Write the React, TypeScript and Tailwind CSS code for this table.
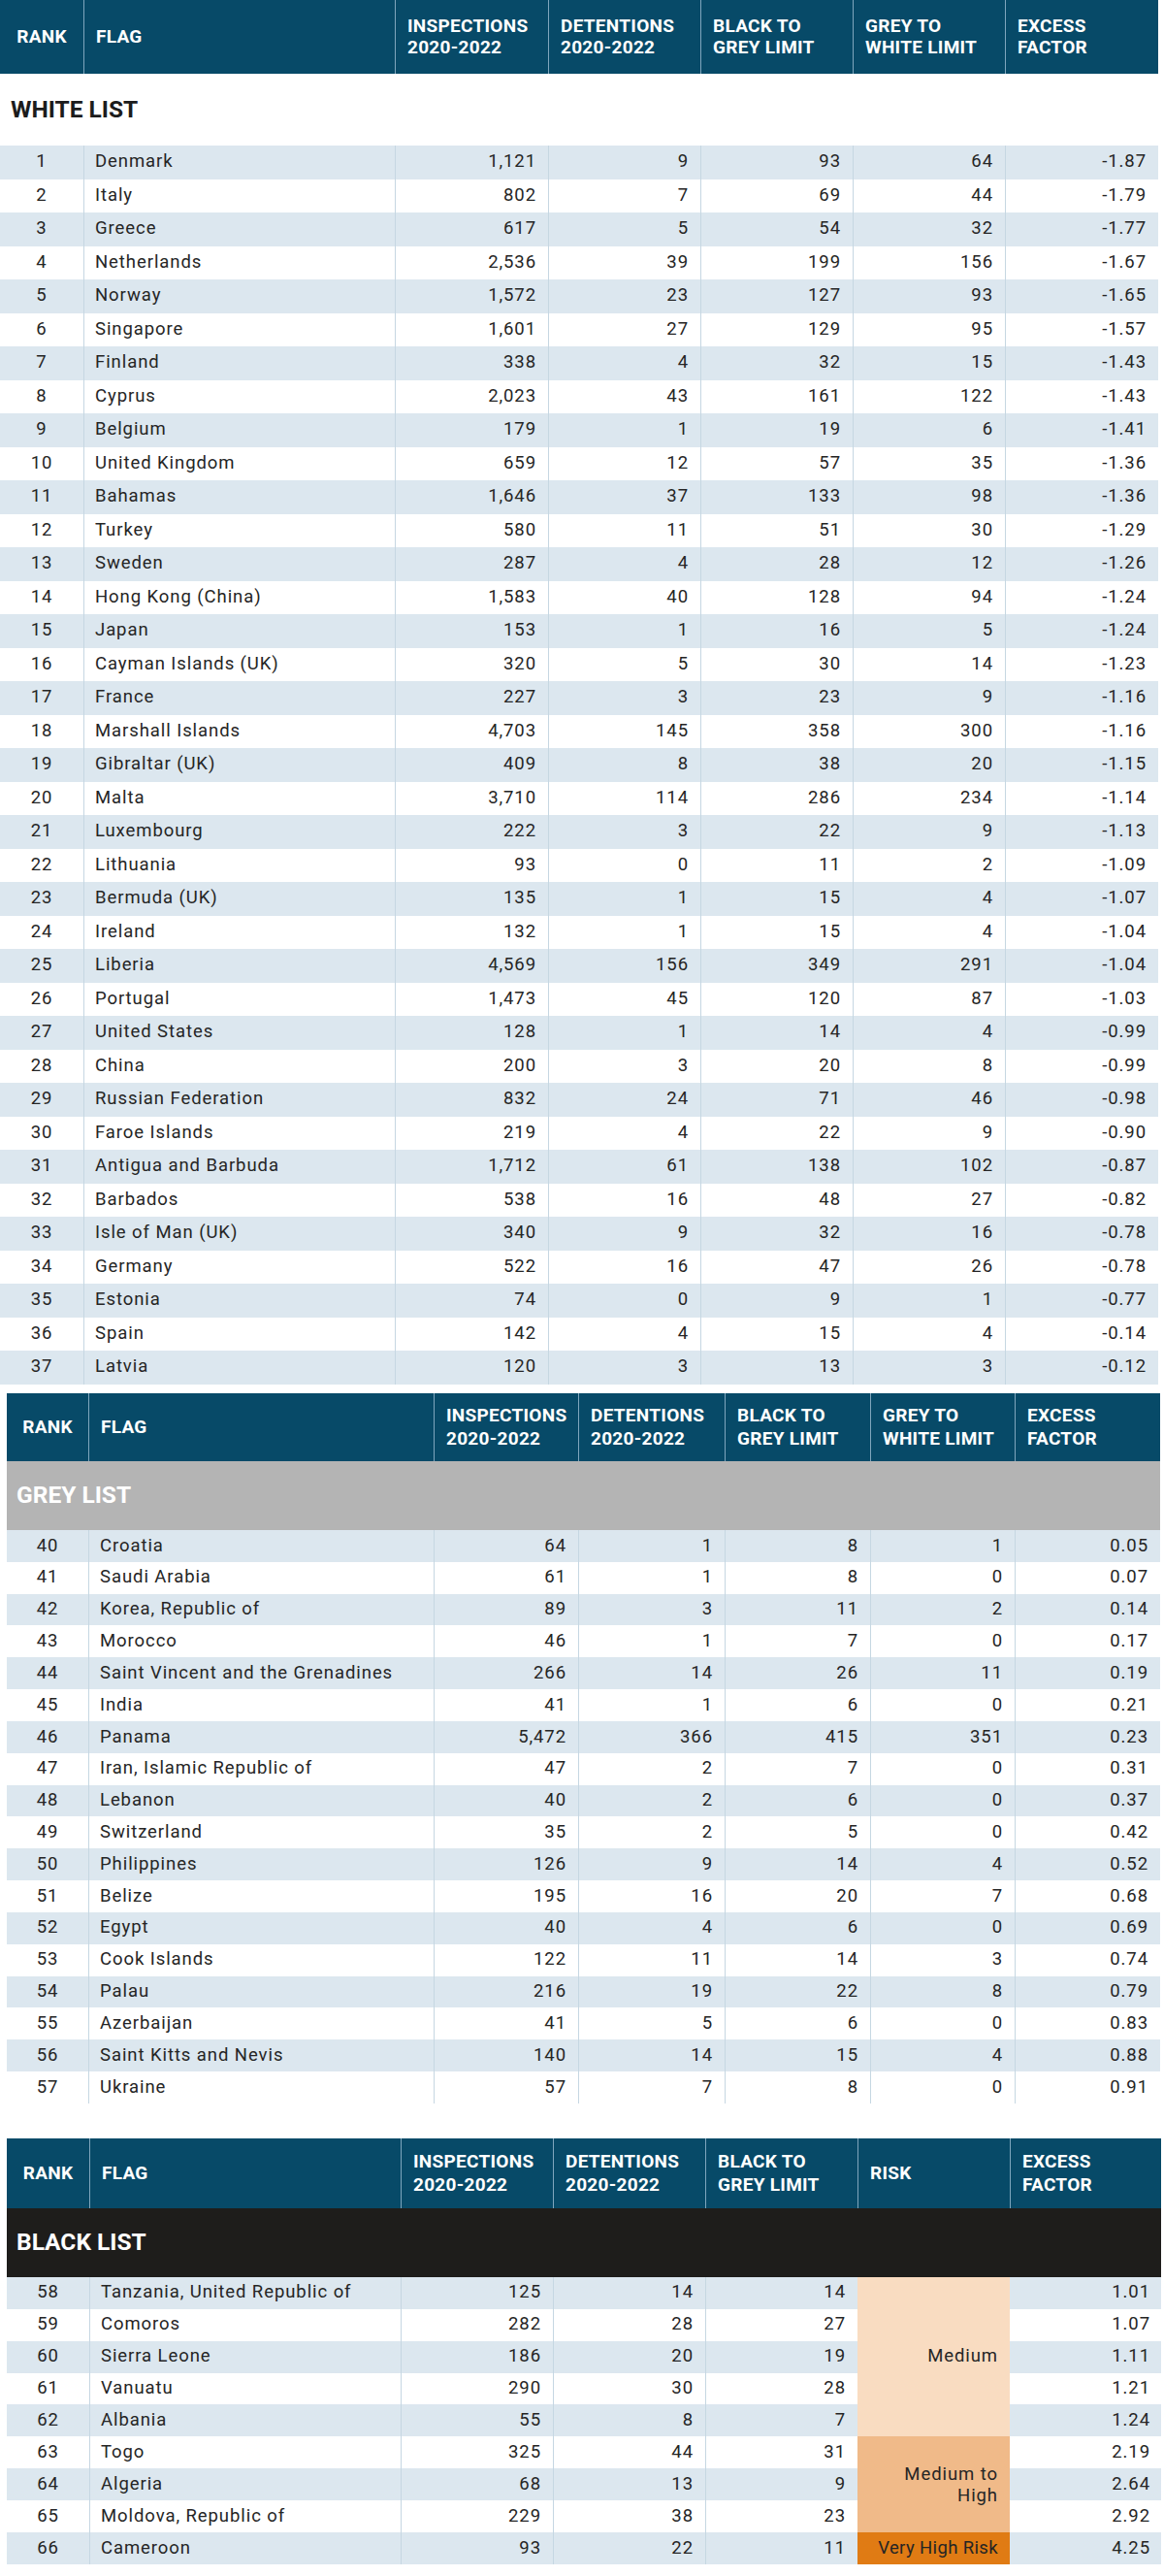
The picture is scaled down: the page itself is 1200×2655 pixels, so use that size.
import React from "react";

type Row = [string, string, string, string, string, string, string];

const white: Row[] = [
  ["1", "Denmark", "1,121", "9", "93", "64", "-1.87"],
  ["2", "Italy", "802", "7", "69", "44", "-1.79"],
  ["3", "Greece", "617", "5", "54", "32", "-1.77"],
  ["4", "Netherlands", "2,536", "39", "199", "156", "-1.67"],
  ["5", "Norway", "1,572", "23", "127", "93", "-1.65"],
  ["6", "Singapore", "1,601", "27", "129", "95", "-1.57"],
  ["7", "Finland", "338", "4", "32", "15", "-1.43"],
  ["8", "Cyprus", "2,023", "43", "161", "122", "-1.43"],
  ["9", "Belgium", "179", "1", "19", "6", "-1.41"],
  ["10", "United Kingdom", "659", "12", "57", "35", "-1.36"],
  ["11", "Bahamas", "1,646", "37", "133", "98", "-1.36"],
  ["12", "Turkey", "580", "11", "51", "30", "-1.29"],
  ["13", "Sweden", "287", "4", "28", "12", "-1.26"],
  ["14", "Hong Kong (China)", "1,583", "40", "128", "94", "-1.24"],
  ["15", "Japan", "153", "1", "16", "5", "-1.24"],
  ["16", "Cayman Islands (UK)", "320", "5", "30", "14", "-1.23"],
  ["17", "France", "227", "3", "23", "9", "-1.16"],
  ["18", "Marshall Islands", "4,703", "145", "358", "300", "-1.16"],
  ["19", "Gibraltar (UK)", "409", "8", "38", "20", "-1.15"],
  ["20", "Malta", "3,710", "114", "286", "234", "-1.14"],
  ["21", "Luxembourg", "222", "3", "22", "9", "-1.13"],
  ["22", "Lithuania", "93", "0", "11", "2", "-1.09"],
  ["23", "Bermuda (UK)", "135", "1", "15", "4", "-1.07"],
  ["24", "Ireland", "132", "1", "15", "4", "-1.04"],
  ["25", "Liberia", "4,569", "156", "349", "291", "-1.04"],
  ["26", "Portugal", "1,473", "45", "120", "87", "-1.03"],
  ["27", "United States", "128", "1", "14", "4", "-0.99"],
  ["28", "China", "200", "3", "20", "8", "-0.99"],
  ["29", "Russian Federation", "832", "24", "71", "46", "-0.98"],
  ["30", "Faroe Islands", "219", "4", "22", "9", "-0.90"],
  ["31", "Antigua and Barbuda", "1,712", "61", "138", "102", "-0.87"],
  ["32", "Barbados", "538", "16", "48", "27", "-0.82"],
  ["33", "Isle of Man (UK)", "340", "9", "32", "16", "-0.78"],
  ["34", "Germany", "522", "16", "47", "26", "-0.78"],
  ["35", "Estonia", "74", "0", "9", "1", "-0.77"],
  ["36", "Spain", "142", "4", "15", "4", "-0.14"],
  ["37", "Latvia", "120", "3", "13", "3", "-0.12"],
];

const grey: Row[] = [
  ["40", "Croatia", "64", "1", "8", "1", "0.05"],
  ["41", "Saudi Arabia", "61", "1", "8", "0", "0.07"],
  ["42", "Korea, Republic of", "89", "3", "11", "2", "0.14"],
  ["43", "Morocco", "46", "1", "7", "0", "0.17"],
  ["44", "Saint Vincent and the Grenadines", "266", "14", "26", "11", "0.19"],
  ["45", "India", "41", "1", "6", "0", "0.21"],
  ["46", "Panama", "5,472", "366", "415", "351", "0.23"],
  ["47", "Iran, Islamic Republic of", "47", "2", "7", "0", "0.31"],
  ["48", "Lebanon", "40", "2", "6", "0", "0.37"],
  ["49", "Switzerland", "35", "2", "5", "0", "0.42"],
  ["50", "Philippines", "126", "9", "14", "4", "0.52"],
  ["51", "Belize", "195", "16", "20", "7", "0.68"],
  ["52", "Egypt", "40", "4", "6", "0", "0.69"],
  ["53", "Cook Islands", "122", "11", "14", "3", "0.74"],
  ["54", "Palau", "216", "19", "22", "8", "0.79"],
  ["55", "Azerbaijan", "41", "5", "6", "0", "0.83"],
  ["56", "Saint Kitts and Nevis", "140", "14", "15", "4", "0.88"],
  ["57", "Ukraine", "57", "7", "8", "0", "0.91"],
];

const black: [string, string, string, string, string, string][] = [
  ["58", "Tanzania, United Republic of", "125", "14", "14", "1.01"],
  ["59", "Comoros", "282", "28", "27", "1.07"],
  ["60", "Sierra Leone", "186", "20", "19", "1.11"],
  ["61", "Vanuatu", "290", "30", "28", "1.21"],
  ["62", "Albania", "55", "8", "7", "1.24"],
  ["63", "Togo", "325", "44", "31", "2.19"],
  ["64", "Algeria", "68", "13", "9", "2.64"],
  ["65", "Moldova, Republic of", "229", "38", "23", "2.92"],
  ["66", "Cameroon", "93", "22", "11", "4.25"],
];

const HSEP = "border-l border-[#7fa6bd]";
const BSEP = "border-l border-[#c6d7e2]";

function HeadCell({ children, first, lh }: { children: React.ReactNode; first?: boolean; lh: string }) {
  return (
    <div
      className={
        "flex items-center text-white font-bold text-[19px] tracking-[0.015em] " +
        lh +
        " " +
        (first ? "justify-center" : HSEP + " pl-[12px]")
      }
    >
      <div>{children}</div>
    </div>
  );
}

function WhiteHeader() {
  return (
    <div className="grid grid-cols-[86px_321px_158px_157px_157px_157px_158px] h-[76px] bg-[#074a68]">
      <HeadCell first lh="leading-[22px]">RANK</HeadCell>
      <HeadCell lh="leading-[22px]">FLAG</HeadCell>
      <HeadCell lh="leading-[22px]">INSPECTIONS<br />2020-2022</HeadCell>
      <HeadCell lh="leading-[22px]">DETENTIONS<br />2020-2022</HeadCell>
      <HeadCell lh="leading-[22px]">BLACK TO<br />GREY LIMIT</HeadCell>
      <HeadCell lh="leading-[22px]">GREY TO<br />WHITE LIMIT</HeadCell>
      <HeadCell lh="leading-[22px]">EXCESS<br />FACTOR</HeadCell>
    </div>
  );
}

function GreyHeader() {
  return (
    <div className="grid grid-cols-[84px_356px_149px_151px_150px_149px_150px] h-[70px] bg-[#074a68]">
      <HeadCell first lh="leading-[24px]">RANK</HeadCell>
      <HeadCell lh="leading-[24px]">FLAG</HeadCell>
      <HeadCell lh="leading-[24px]">INSPECTIONS<br />2020-2022</HeadCell>
      <HeadCell lh="leading-[24px]">DETENTIONS<br />2020-2022</HeadCell>
      <HeadCell lh="leading-[24px]">BLACK TO<br />GREY LIMIT</HeadCell>
      <HeadCell lh="leading-[24px]">GREY TO<br />WHITE LIMIT</HeadCell>
      <HeadCell lh="leading-[24px]">EXCESS<br />FACTOR</HeadCell>
    </div>
  );
}

function BlackHeader() {
  return (
    <div className="grid grid-cols-[85px_321px_157px_157px_157px_157px_156px] h-[72px] bg-[#074a68]">
      <HeadCell first lh="leading-[24px]">RANK</HeadCell>
      <HeadCell lh="leading-[24px]">FLAG</HeadCell>
      <HeadCell lh="leading-[24px]">INSPECTIONS<br />2020-2022</HeadCell>
      <HeadCell lh="leading-[24px]">DETENTIONS<br />2020-2022</HeadCell>
      <HeadCell lh="leading-[24px]">BLACK TO<br />GREY LIMIT</HeadCell>
      <HeadCell lh="leading-[24px]">RISK</HeadCell>
      <HeadCell lh="leading-[24px]">EXCESS<br />FACTOR</HeadCell>
    </div>
  );
}

function BodyRow({ r, i, cols, h }: { r: string[]; i: number; cols: string; h: string }) {
  const bg = i % 2 === 0 ? "bg-[#dce7ef]" : "bg-white";
  return (
    <div className={"grid " + cols + " " + h + " " + bg}>
      {r.map((c, j) => (
        <div
          key={j}
          className={
            "flex items-center " +
            (j === 0 ? "justify-center" : j === 1 ? BSEP + " pl-[11px]" : BSEP + " justify-end pr-[12px]")
          }
        >
          {c}
        </div>
      ))}
    </div>
  );
}

export default function App() {
  return (
    <div className="w-[1200px] h-[2655px] bg-white text-[#252525] font-['Roboto',sans-serif] text-[18.5px] tracking-[0.05em]">
      {/* WHITE LIST */}
      <div className="w-[1194px]">
        <WhiteHeader />
        <div className="h-[74px] flex items-center pl-[11px] text-[24.5px] font-bold text-[#1c1c1c] tracking-normal">
          WHITE LIST
        </div>
        {white.map((r, i) => (
          <BodyRow key={i} r={r} i={i} cols="grid-cols-[86px_321px_158px_157px_157px_157px_158px]" h="h-[34.5px]" />
        ))}
      </div>

      {/* GREY LIST */}
      <div className="ml-[7px] mt-[9.5px] w-[1189px]">
        <GreyHeader />
        <div className="h-[71px] flex items-center pl-[10px] text-[24.5px] font-bold text-white bg-[#b4b4b4] tracking-normal">
          GREY LIST
        </div>
        {grey.map((r, i) => (
          <BodyRow key={i} r={r} i={i} cols="grid-cols-[84px_356px_149px_151px_150px_149px_150px]" h="h-[32.83px]" />
        ))}
      </div>

      {/* BLACK LIST */}
      <div className="ml-[7px] mt-[36px] w-[1190px]">
        <BlackHeader />
        <div className="h-[71px] flex items-center pl-[10px] text-[24.5px] font-bold text-white bg-[#1e1d1b] tracking-normal">
          BLACK LIST
        </div>
        <div className="flex">
          <div className="w-[877px]">
            {black.map((r, i) => (
              <BodyRow
                key={i}
                r={r.slice(0, 5)}
                i={i}
                cols="grid-cols-[85px_321px_157px_157px_157px]"
                h="h-[32.9px]"
              />
            ))}
          </div>
          <div className="w-[157px] flex flex-col">
            <div className="h-[164.5px] bg-[#f9dcc1] flex items-center justify-end pr-[12px]">Medium</div>
            <div className="h-[98.7px] bg-[#f0ba89] flex items-center justify-end pr-[12px] text-right leading-[22px]">
              Medium to
              <br />
              High
            </div>
            <div className="h-[32.9px] bg-[#e07b14] flex items-center justify-end pr-[12px] tracking-[0.02em]">Very High Risk</div>
          </div>
          <div className="w-[156px]">
            {black.map((r, i) => (
              <div
                key={i}
                className={
                  "h-[32.9px] flex items-center justify-end pr-[11px] " + (i % 2 === 0 ? "bg-[#dce7ef]" : "bg-white")
                }
              >
                {r[5]}
              </div>
            ))}
          </div>
        </div>
      </div>
    </div>
  );
}
